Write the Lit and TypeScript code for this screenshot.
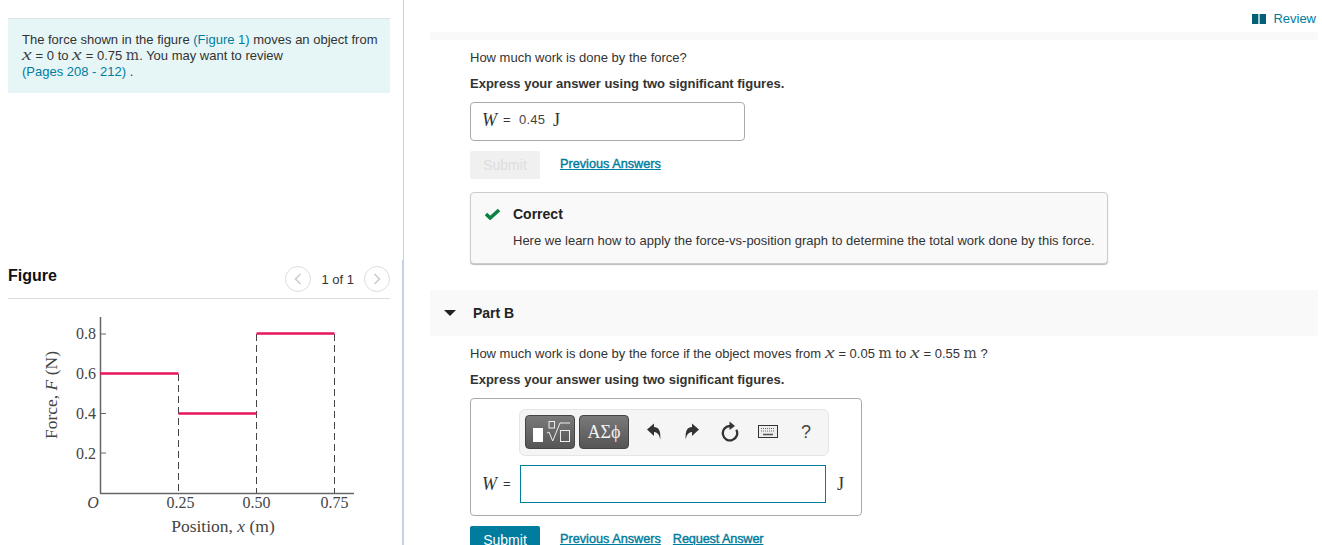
import { LitElement, html, css, svg } from "lit";
import { customElement } from "lit/decorators.js";

const mx = (s: string) => html`<span class="mi">${s}</span>`;
const mm = (s: string) => html`<span class="mn">${s}</span>`;

const chart = svg`
  <g fill="none" stroke="#666" stroke-width="1.5">
    <path d="M100.5 317V493.5M100 493.5H354"/>
    <path d="M100 334H106M100 373.5H106M100 413.5H106M100 453H106" stroke-width="1"/>
  </g>
  <g fill="none" stroke="#444" stroke-width="1" stroke-dasharray="7 4">
    <path d="M178.5 374V493M256.5 334V493M334.5 334V493"/>
  </g>
  <g fill="none" stroke="#e8175d" stroke-width="2.5">
    <path d="M100 373.5H178.5M178.5 413.5H256.5M256.5 333.5H334.5"/>
  </g>
  <g class="lab" text-anchor="end">
    <text x="96" y="339">0.8</text>
    <text x="96" y="379">0.6</text>
    <text x="96" y="419">0.4</text>
    <text x="96" y="459">0.2</text>
  </g>
  <g class="lab" text-anchor="middle">
    <text x="180.5" y="508">0.25</text>
    <text x="256.5" y="508">0.50</text>
    <text x="334.5" y="508">0.75</text>
    <text x="93" y="508" font-style="italic">O</text>
    <text x="223" y="531.5" class="big">Position, <tspan font-style="italic">x</tspan> (m)</text>
    <text transform="translate(57 395) rotate(-90)" class="big">Force, <tspan font-style="italic">F</tspan> (N)</text>
  </g>
`;

@customElement("app-root")
export class AppRoot extends LitElement {
  static styles = css`
    :host {
      display: flex;
      width: 1322px;
      height: 545px;
      overflow: hidden;
      background: #fff;
      font-family: "Liberation Sans", Arial, sans-serif;
      font-size: 13px;
      line-height: 16px;
      color: #333;
    }
    a { color: #007c9e; text-decoration: none; }
    .mi {
      display: inline-block;
      width: 10px;
      font-family: "Liberation Serif", serif;
      font-style: italic;
      font-size: 16px;
      color: #444;
      line-height: 14px;
      transform: scaleX(1.35);
      transform-origin: left center;
    }
    .mn { font-family: "DejaVu Serif", serif; font-size: 14px; color: #444; line-height: 14px; }
    .left {
      flex: none;
      width: 404px;
      display: flex;
      flex-direction: column;
      background:
        linear-gradient(#c3d3e5, #c3d3e5) right top / 1px 260px no-repeat,
        linear-gradient(#c3d3e5, #c3d3e5) right bottom / 2px 285px no-repeat;
    }
    .info {
      margin: 18px 14px 0 8px;
      height: 75px;
      box-sizing: border-box;
      padding: 13px 6px 0 14px;
      background: #e6f6f7;
      border-top: 1px solid #dde3e6;
    }
    .fighead {
      margin: 171px 14px 0 8px;
      height: 35px;
      box-sizing: border-box;
      border-bottom: 1px solid #ddd;
      display: flex;
      align-items: flex-start;
      justify-content: space-between;
    }
    .figtitle { font-size: 16px; font-weight: bold; color: #111; line-height: 22px; margin-top: 1px; }
    .pager { display: flex; align-items: center; gap: 10px; margin-top: 2px; color: #333; }
    .pager .count { padding-top: 2px; }
    .circ {
      width: 24px;
      height: 24px;
      border: 1px solid #ddd;
      border-radius: 50%;
      display: flex;
      align-items: center;
      justify-content: center;
    }
    .chart { display: block; width: 403px; height: 246px; }
    .lab { font-family: "Liberation Serif", serif; font-size: 16px; fill: #444; }
    .lab .big { font-size: 17.5px; }
    .right { flex: 1; padding: 0 4px 0 26px; min-width: 0; }
    .review {
      height: 32px;
      display: flex;
      align-items: center;
      justify-content: flex-end;
      gap: 7px;
      padding: 6px 2px 0 0;
      box-sizing: border-box;
    }
    .band { height: 8px; background: #f9f9f9; }
    .body { padding-left: 40px; }
    .q { margin-top: 10px; }
    .b { margin-top: 10px; font-weight: bold; color: #333; }
    .ansbox {
      margin-top: 10px;
      border: 1px solid #aaa;
      border-radius: 4px;
      box-sizing: border-box;
    }
    .done {
      width: 275px;
      height: 39px;
      display: flex;
      align-items: center;
      padding: 0 0 3px 11px;
    }
    .w { font-family: "Liberation Serif", serif; font-style: italic; font-size: 18px; color: #333; width: 21px; }
    .eq { width: 16px; flex: none; }
    .inrow .eq { width: 17px; }
    .val { color: #444; letter-spacing: 0.2px; }
    .unit { font-family: "Liberation Serif", serif; font-size: 18px; color: #333; margin-left: 8px; }
    .actions { margin-top: 10px; display: flex; align-items: flex-start; gap: 20px; }
    .submit {
      width: 70px;
      height: 28px;
      display: flex;
      align-items: center;
      justify-content: center;
      font-size: 14px;
      border-radius: 2px;
      background: #007c9e;
      color: #fff;
    }
    .submit.off { background: #f0f0f0; color: #ddd; }
    .links { display: flex; gap: 12px; padding-top: 5px; }
    .links a { text-decoration: underline; font-size: 12.7px; -webkit-text-stroke: 0.4px #007c9e; }
    .links a.req { letter-spacing: -0.13px; }
    .feedback {
      margin-top: 13px;
      width: 638px;
      height: 72px;
      box-sizing: border-box;
      background: #f9f9f9;
      border: 1px solid #ccc;
      border-radius: 4px;
      box-shadow: 0 1px 1px #bbb;
      padding: 13px 0 0 14px;
    }
    .fbhead { display: flex; align-items: center; gap: 13px; font-size: 14px; font-weight: bold; color: #222; }
    .fbtext { margin: 11px 0 0 28px; color: #333; }
    .part {
      margin-top: 26px;
      height: 46px;
      background: #f9f9f9;
      display: flex;
      align-items: center;
      gap: 17px;
      padding-left: 14px;
      font-size: 14px;
      font-weight: bold;
      color: #222;
    }
    .tri {
      width: 0;
      height: 0;
      border-left: 6px solid transparent;
      border-right: 6px solid transparent;
      border-top: 6px solid #222;
    }
    .entry {
      width: 392px;
      height: 118px;
      padding: 10px 0 0 11px;
    }
    .toolbar {
      margin-left: 37px;
      width: 310px;
      height: 47px;
      box-sizing: border-box;
      background: #f5f5f5;
      border: 1px solid #e5e5e5;
      border-radius: 6px;
      display: flex;
      align-items: center;
      padding: 0 0 2px 5px;
    }
    .tbtn {
      height: 34px;
      box-sizing: border-box;
      border: 1px solid #444;
      border-radius: 4px;
      background: linear-gradient(#7a7a7a, #555);
      display: flex;
      align-items: center;
      justify-content: center;
      color: #f2f2f2;
    }
    .t1 { width: 50px; margin-right: 4px; }
    .t2 { width: 50px; font-family: "Liberation Serif", serif; font-size: 18px; margin-right: 6px; }
    .ico { width: 38px; height: 24px; display: flex; align-items: center; justify-content: center; flex: none; }
    .qm { font-size: 18px; color: #444; }
    .inrow { display: flex; align-items: center; margin-top: 9px; }
    .input {
      width: 306px;
      height: 38px;
      box-sizing: border-box;
      border: 1px solid #007c9e;
      background: #fff;
      flex: none;
    }
    .inrow .unit { margin-left: 11px; }
  `;

  render() {
    return html`
      <div class="left">
        <div class="info">
          The force shown in the figure <a href="#">(Figure 1)</a> moves an object from<br />
          ${mx("x")} = 0 to ${mx("x")} = 0.75 ${mm("m")}. You may want to review<br />
          <a href="#">(Pages 208 - 212)</a> .
        </div>
        <div class="fighead">
          <div class="figtitle">Figure</div>
          <div class="pager">
            <span class="circ">
              <svg width="8" height="12" viewBox="0 0 8 12"><path d="M6.500 1L1.500 6l5 5" fill="none" stroke="#ccc" stroke-width="1.600"/></svg>
            </span>
            <span class="count">1 of 1</span>
            <span class="circ">
              <svg width="8" height="12" viewBox="0 0 8 12"><path d="M1.500 1l5 5-5 5" fill="none" stroke="#ccc" stroke-width="1.600"/></svg>
            </span>
          </div>
        </div>
        <svg class="chart" viewBox="0 299 403 246">${chart}</svg>
      </div>
      <div class="right">
        <div class="review">
          <svg width="14" height="10" viewBox="0 0 14 10"><path d="M0 0h6.300v10H0zM7.700 0H14v10H7.700z" fill="#045f78"/><path d="M6.300 0h1.400v10H6.300z" fill="#9cc"/></svg>
          <a href="#">Review</a>
        </div>
        <div class="band"></div>
        <div class="body">
          <div class="q">How much work is done by the force?</div>
          <div class="b">Express your answer using two significant figures.</div>
          <div class="ansbox done">
            <span class="w">W</span><span class="eq">=</span><span class="val">0.45</span><span class="unit">J</span>
          </div>
          <div class="actions">
            <div class="submit off">Submit</div>
            <div class="links"><a href="#">Previous Answers</a></div>
          </div>
          <div class="feedback">
            <div class="fbhead">
              <svg width="15" height="12" viewBox="0 0 15 12"><path d="M1 6l4.200 4L14 2" fill="none" stroke="#0a8043" stroke-width="3.500"/></svg>
              <span>Correct</span>
            </div>
            <div class="fbtext">Here we learn how to apply the force-vs-position graph to determine the total work done by this force.</div>
          </div>
        </div>
        <div class="part"><span class="tri"></span><span>Part B</span></div>
        <div class="body">
          <div class="q">How much work is done by the force if the object moves from ${mx("x")} = 0.05 ${mm("m")} to ${mx("x")} = 0.55 ${mm("m")} ?</div>
          <div class="b">Express your answer using two significant figures.</div>
          <div class="ansbox entry">
            <div class="toolbar">
              <div class="tbtn t1">
                <svg width="48" height="32" viewBox="0 0 48 32" fill="none">
                  <rect x="7" y="12" width="10" height="14" fill="#fff"/>
                  <rect x="23" y="5.500" width="5.500" height="6.500" stroke="#eee"/>
                  <path d="M21 17l2-1 3.700 9 7.300-18h10" stroke="#eee"/>
                  <rect x="34.500" y="14.500" width="9" height="11" stroke="#eee"/>
                </svg>
              </div>
              <div class="tbtn t2">ΑΣϕ</div>
              <div class="ico">
                <svg width="16" height="18" viewBox="0 0 16 18"><path d="M1 6.500L8 .5V4c4.500 0 7 3.500 6.300 12.500C13.300 12 12 9.500 8 9v4z" fill="#333"/></svg>
              </div>
              <div class="ico">
                <svg width="16" height="18" viewBox="0 0 16 18"><path d="M15 6.500L8 .5V4C3.500 4 1 7.500 1.700 16.500 2.700 12 4 9.500 8 9v4z" fill="#333"/></svg>
              </div>
              <div class="ico">
                <svg width="18" height="21" viewBox="0 0 18 21"><path d="M9 5a7.200 7.200 0 1 0 6.300 3.700" fill="none" stroke="#333" stroke-width="2.300"/><path d="M8.500 .5l5.500 4.500-5.500 4z" fill="#333"/></svg>
              </div>
              <div class="ico">
                <svg width="20" height="13" viewBox="0 0 20 13"><rect x=".5" y=".5" width="19" height="12" fill="#eee" stroke="#333"/><path d="M3 3.500h14M3 6h14" stroke="#666" stroke-width="1.200" stroke-dasharray="1 1"/><path d="M5 9.500h10" stroke="#555" stroke-width="1.500"/></svg>
              </div>
              <div class="ico qm">?</div>
            </div>
            <div class="inrow">
              <span class="w">W</span><span class="eq">=</span>
              <div class="input"></div>
              <span class="unit">J</span>
            </div>
          </div>
          <div class="actions">
            <div class="submit">Submit</div>
            <div class="links"><a href="#">Previous Answers</a><a class="req" href="#">Request Answer</a></div>
          </div>
        </div>
      </div>
    `;
  }
}
